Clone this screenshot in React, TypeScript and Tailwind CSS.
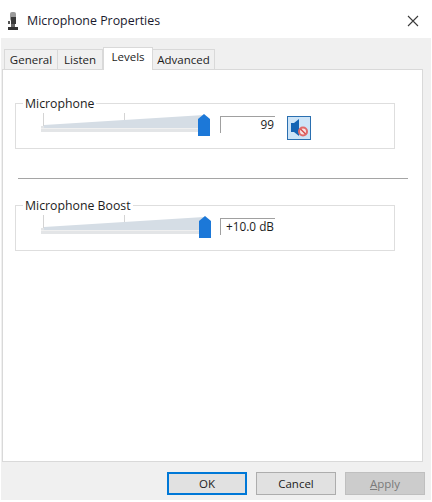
const tabs = [
    { label: "General", width: "w-[54px]" },
    { label: "Listen", width: "w-[45px]" },
    { label: "Levels", width: "w-[50px]" },
    { label: "Advanced", width: "w-[62px]" },
];

const LevelSlider = ({ thumbX }: { thumbX: number }) => (
    <svg width="176" height="32" viewBox="0 0 176 32" className="shrink-0 block">
        <line x1="2.5" y1="1" x2="2.5" y2="14" stroke="#d4d4d4" />
        <line x1="83.5" y1="1" x2="83.5" y2="14" stroke="#d4d4d4" />
        <rect x="0" y="14" width="164" height="6" fill="#e3e5e7" />
        <rect x="0" y="16" width="164" height="1" fill="#f0f0f0" />
        <polygon points="3,13 163,3 163,16 3,16" fill="#d5dde5" />
        <polygon
            points={`${thumbX},7 ${thumbX + 6},2 ${thumbX + 12},7 ${thumbX + 12},24 ${thumbX},24`}
            fill="#1c78d8"
        />
    </svg>
);

const MuteIcon = () => (
    <svg width="24" height="24" viewBox="0 0 24 24" className="shrink-0 block">
        <rect x="0.5" y="0.5" width="23" height="23" fill="#cde4f7" stroke="#2a6fb0" />
        <rect x="4" y="7" width="3" height="9" fill="#1464b4" />
        <polygon points="7,7 12,3 12,20 7,16" fill="#1464b4" />
        <circle cx="16" cy="15.5" r="5" fill="#e06a6a" />
        <circle cx="16" cy="15.5" r="3" fill="#f7e3e3" />
        <line x1="13.5" y1="13" x2="18.5" y2="18" stroke="#d84a4a" strokeWidth="1.4" />
    </svg>
);

const LevelBox = ({ title, value, thumbX, right, mute }: { title: string; value: string; thumbX: number; right?: boolean; mute?: boolean }) => (
    <fieldset className="w-[380px] h-[54px] ml-[12px] border border-[#dedede] min-w-0">
        <legend className="ml-[7px] px-[2px] pt-[2px] text-[12.3px] leading-[14px] text-[#1c1c1c]">{title}</legend>
        <div className="flex items-start mt-[1px] pl-[25px]">
            <LevelSlider thumbX={thumbX} />
            <div
                className={`w-[55px] h-[17px] mt-[4px] ml-[3px] border-t border-l border-[#a0a0a0] bg-white text-[11.8px] leading-[15px] text-[#1c1c1c] ${right ? "text-right pr-[1px]" : "pl-[5px] whitespace-nowrap"}`}
            >
                {value}
            </div>
            {mute && (
                <div className="ml-[12px] mt-[4px]">
                    <MuteIcon />
                </div>
            )}
        </div>
    </fieldset>
);

const FooterButton = ({ children, className }: { children: React.ReactNode; className: string }) => (
    <button className={`w-[80px] h-[23px] text-[11.5px] leading-[18px] ${className}`}>{children}</button>
);

export default function App() {
    return (
        <div className="w-[432px] h-[502px] bg-white font-['Open_Sans','Liberation_Sans',sans-serif] text-[12px] overflow-hidden">
            <div className="h-[38px] flex items-center pt-[4px] pl-[7px] pr-[13px]">
                <svg width="12" height="18" viewBox="0 0 12 18" className="shrink-0">
                    <rect x="3" y="0" width="6" height="9" rx="2" fill="#9a9a9a" />
                    <rect x="4" y="5" width="5" height="7" fill="#3a3a3a" />
                    <rect x="1" y="9" width="2" height="3" fill="#555555" />
                    <rect x="4" y="12" width="4" height="3" fill="#666666" />
                    <rect x="1" y="15" width="10" height="3" fill="#333333" />
                </svg>
                <span className="ml-[8px] text-[12.4px] text-[#1a1a2e]">Microphone Properties</span>
                <svg width="12" height="12" viewBox="0 0 12 12" className="ml-auto">
                    <path d="M1 1L11 11M11 1L1 11" stroke="#3a3a3a" strokeWidth="1.1" />
                </svg>
            </div>
            <div className="w-[430px] h-[462px] ml-[1px] bg-[#f0f0f0] pl-[1px] pt-[9px]">
                <div className="flex items-end h-[22px] pl-[2px] relative z-10">
                    {tabs.map((tab) =>
                        tab.label === "Levels" ? (
                            <div key={tab.label} className={`${tab.width} h-[23px] -mb-[1px] bg-white border border-b-0 border-[#d9d9d9] text-center text-[11.5px] leading-[18px] text-[#1c1c1c]`}>
                                {tab.label}
                            </div>
                        ) : (
                            <div key={tab.label} className={`${tab.width} h-[20px] bg-[#f0f0f0] border border-b-0 border-l-0 first:border-l border-[#d9d9d9] text-center text-[11.5px] leading-[19px] text-[#1c1c1c]`}>
                                {tab.label}
                            </div>
                        ),
                    )}
                </div>
                <div className="w-[421px] h-[393px] bg-white border border-[#d9d9d9] pt-[25px]">
                    <LevelBox title="Microphone" value="99" thumbX={157} right mute />
                    <div className="h-px w-[390px] ml-[15px] mt-[29px] mb-[18px] bg-[#a5a5a5]" />
                    <LevelBox title="Microphone Boost" value="+10.0 dB" thumbX={158} />
                </div>
                <div className="flex justify-end gap-[9px] pt-[10px] pr-[6px]">
                    <FooterButton className="bg-[#e1e1e1] border-2 border-[#0078d7] text-[#1c1c1c]">OK</FooterButton>
                    <FooterButton className="bg-[#e1e1e1] border border-[#adadad] text-[#1c1c1c]">Cancel</FooterButton>
                    <FooterButton className="bg-[#cccccc] border border-[#bfbfbf] text-[#7a7a7a]">
                        <span className="underline">A</span>pply
                    </FooterButton>
                </div>
            </div>
        </div>
    );
}
